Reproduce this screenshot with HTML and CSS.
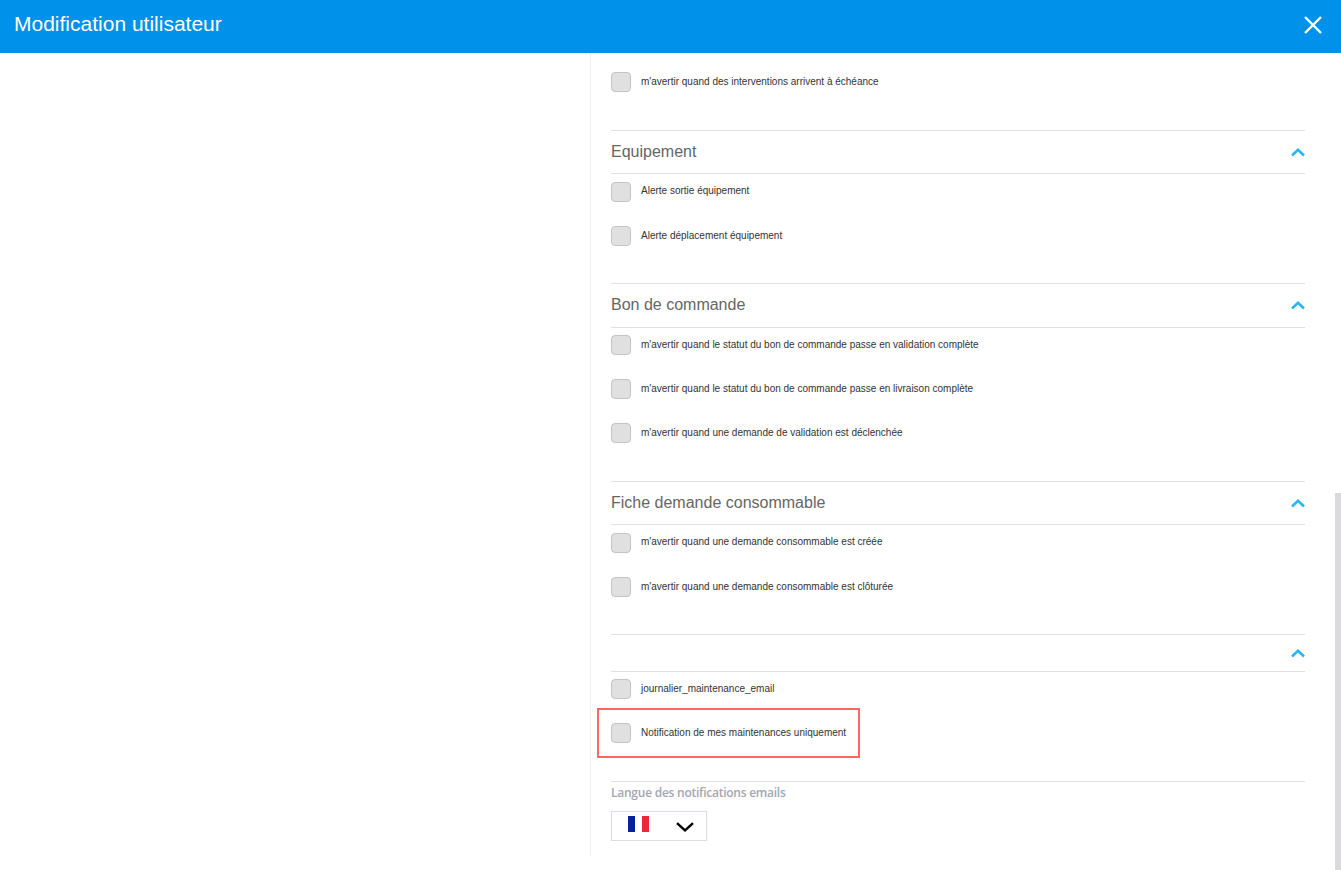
FILE: index.html
```html
<!DOCTYPE html>
<html lang="fr">
<head>
<meta charset="utf-8">
<title>Modification utilisateur</title>
<link rel="stylesheet" href="styles.css">
</head>
<body>
<header class="topbar">
  <h1 class="topbar-title">Modification utilisateur</h1>
  <button class="close-btn" aria-label="Fermer">
    <svg width="20" height="20" viewBox="0 0 20 20"><path d="M2 2 L18 18 M18 2 L2 18" stroke="#fff" stroke-width="2.4" fill="none"/></svg>
  </button>
</header>
<main class="layout">
  <div class="side"></div>
  <div class="panel">
    <div class="intro">
      <div class="row"><span class="box"></span><span class="label">m'avertir quand des interventions arrivent à échéance</span></div>
    </div>

    <section class="section sec-first">
      <div class="sec-head"><span class="sec-title">Equipement</span>
        <svg class="chev" width="14" height="9" viewBox="0 0 14 9"><path d="M1 7.5 L7 1.8 L13 7.5" stroke="#29b6f6" stroke-width="2.6" fill="none"/></svg></div>
      <div class="rows">
        <div class="row"><span class="box"></span><span class="label label-up">Alerte sortie équipement</span></div>
        <div class="row"><span class="box"></span><span class="label">Alerte déplacement équipement</span></div>
      </div>
    </section>

    <section class="section sec-second">
      <div class="sec-head"><span class="sec-title">Bon de commande</span>
        <svg class="chev" width="14" height="9" viewBox="0 0 14 9"><path d="M1 7.5 L7 1.8 L13 7.5" stroke="#29b6f6" stroke-width="2.6" fill="none"/></svg></div>
      <div class="rows">
        <div class="row"><span class="box"></span><span class="label">m'avertir quand le statut du bon de commande passe en validation complète</span></div>
        <div class="row"><span class="box"></span><span class="label">m'avertir quand le statut du bon de commande passe en livraison complète</span></div>
        <div class="row"><span class="box"></span><span class="label">m'avertir quand une demande de validation est déclenchée</span></div>
      </div>
    </section>

    <section class="section sec-third">
      <div class="sec-head"><span class="sec-title">Fiche demande consommable</span>
        <svg class="chev" width="14" height="9" viewBox="0 0 14 9"><path d="M1 7.5 L7 1.8 L13 7.5" stroke="#29b6f6" stroke-width="2.6" fill="none"/></svg></div>
      <div class="rows">
        <div class="row"><span class="box"></span><span class="label label-up">m'avertir quand une demande consommable est créée</span></div>
        <div class="row"><span class="box"></span><span class="label">m'avertir quand une demande consommable est clôturée</span></div>
      </div>
    </section>

    <section class="section sec-fourth">
      <div class="sec-head"><span class="sec-title"></span>
        <svg class="chev" width="14" height="9" viewBox="0 0 14 9"><path d="M1 7.5 L7 1.8 L13 7.5" stroke="#29b6f6" stroke-width="2.6" fill="none"/></svg></div>
      <div class="rows">
        <div class="row"><span class="box"></span><span class="label">journalier_maintenance_email</span></div>
        <div class="row"><span class="box"></span><span class="label">Notification de mes maintenances uniquement</span><span class="marker"></span></div>
      </div>
    </section>

    <section class="lang">
      <div class="lang-title">Langue des notifications emails</div>
      <div class="lang-select">
        <svg class="flag" width="21" height="16" viewBox="0 0 21 16"><rect width="7" height="16" fill="#002395"/><rect x="7" width="7" height="16" fill="#fff"/><rect x="14" width="7" height="16" fill="#ed2939"/></svg>
        <svg class="down" width="18" height="10" viewBox="0 0 18 10"><path d="M1 1.2 L9 8.4 L17 1.2" stroke="#000" stroke-width="2.4" fill="none"/></svg>
      </div>
    </section>
  </div>
</main>
<div class="scrollbar"></div>
</body>
</html>
```

FILE: styles.css
```css
* { box-sizing: border-box; }
html, body { margin: 0; padding: 0; height: 100%; overflow: hidden; background: #fff; }
body { font-family: "Liberation Sans", Arial, sans-serif; position: relative; }

.topbar {
  height: 53px;
  background: #0091ea;
  display: flex;
  align-items: center;
  justify-content: space-between;
  padding: 0 18px 0 14px;
}
.topbar-title { margin: 0; font-size: 21px; font-weight: 400; color: #fff; line-height: 48px; align-self: flex-start; }
.close-btn { background: none; border: 0; padding: 0; width: 20px; height: 20px; display: block; margin-top: -4px; }
.close-btn svg { display: block; }

.layout { display: flex; height: 803px; }
.side { width: 590px; flex: none; }
.panel { flex: 1; border-left: 1px solid #eee; padding: 0 36px 0 20px; }

.intro { padding-top: 19px; height: 77px; }

.section { border-top: 1px solid #e0e0e0; }
.sec-first { height: 153px; }
.sec-second { height: 198px; }
.sec-third { height: 153px; }
.sec-fourth { height: 147px; }

.sec-head {
  display: flex;
  align-items: center;
  justify-content: space-between;
  height: 43px;
  border-bottom: 1px solid #e0e0e0;
}
.sec-second .sec-head { height: 44px; }
.sec-second .sec-title { margin-bottom: 2px; }
.sec-fourth .sec-head { height: 37px; }
.sec-title { font-size: 16px; color: #666; }
.chev { display: block; }

.rows { padding-top: 8px; }
.sec-second .rows, .sec-fourth .rows { padding-top: 7px; }

.row { display: flex; align-items: flex-start; height: 44px; position: relative; }
.intro .row { height: 20px; }
.box {
  width: 20px; height: 20px; flex: none;
  background: #e0e0e0;
  border: 1px solid #c4c4c4;
  border-radius: 4px;
}
.label {
  margin-left: 10px;
  font-size: 10px;
  line-height: 19px;
  color: #333;
}
.label-up { line-height: 18px; }
.marker {
  position: absolute;
  left: -14px; top: -15px;
  width: 263px; height: 50px;
  border: 2px solid #ff6666;
}

.lang { border-top: 1px solid #e0e0e0; }
.lang-title {
  font-family: "Open Sans", sans-serif;
  font-size: 12px;
  font-weight: 600;
  letter-spacing: -0.25px;
  color: #a5a5b2;
  line-height: 20px;
  margin-top: 1px;
}
.lang-select {
  margin-top: 8px;
  width: 96px; height: 30px;
  border: 1px solid #dcdce4;
  display: flex;
  align-items: center;
  padding-left: 16px;
}
.flag { display: block; margin-top: -4px; }
.down { display: block; margin-left: 27px; margin-top: 1px; }

.scrollbar {
  position: absolute;
  right: 0; top: 493px; bottom: 0;
  width: 6px;
  background: #d9d9de;
}
```
